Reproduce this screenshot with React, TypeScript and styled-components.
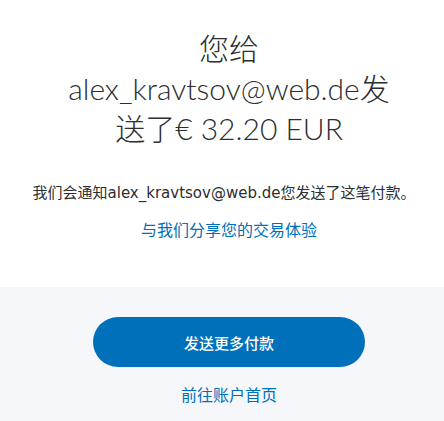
import styled, { createGlobalStyle } from "styled-components";

const GlobalStyle = createGlobalStyle`
    html, body {
        margin: 0;
        padding: 0;
        background: #ffffff;
    }
    body {
        font-family: "Open Sans", "Noto Sans CJK SC", sans-serif;
        color: #2c2e2f;
    }
`;

const Page = styled.div`
    width: 444px;
    min-height: 421px;
    display: flex;
    flex-direction: column;
`;

const Top = styled.section`
    box-sizing: border-box;
    background: #ffffff;
    padding: 28px 0 0 14px;
    height: 287px;
    display: flex;
    flex-direction: column;
    align-items: center;
`;

const Title = styled.h1`
    margin: 0;
    width: 340px;
    text-align: center;
    font-family: "Lato", "Noto Sans CJK SC", sans-serif;
    font-weight: 300;
    font-size: 30px;
    line-height: 40px;
    color: #2c2e2f;
`;

const Note = styled.p`
    margin: 35px 10px 0 0;
    font-family: "DejaVu Sans", "Noto Sans CJK SC", sans-serif;
    font-size: 15px;
    line-height: 20px;
    color: #2c2e2f;
    white-space: nowrap;
`;

const TextLink = styled.a<{ $top: number }>`
    display: block;
    margin-top: ${(p) => p.$top}px;
    font-family: "Open Sans", "Noto Sans CJK SC", sans-serif;
    font-size: 16px;
    line-height: 22px;
    color: #0070ba;
    text-decoration: none;
    text-align: center;
`;

const Bottom = styled.section`
    flex: 1;
    background: #f5f7fa;
    display: flex;
    flex-direction: column;
    align-items: center;
    padding: 30px 0 0 14px;
`;

const PrimaryButton = styled.button`
    width: 272px;
    height: 50px;
    border: none;
    border-radius: 25px;
    background: #0070ba;
    color: #ffffff;
    font-family: "Open Sans", "Noto Sans CJK SC", sans-serif;
    font-size: 15px;
    font-weight: 500;
    cursor: pointer;
`;

export default function App() {
    return (
        <>
            <GlobalStyle />
            <Page>
                <Top>
                    <Title>您给alex_kravtsov@web.de发送了€ 32.20 EUR</Title>
                    <Note>我们会通知alex_kravtsov@web.de您发送了这笔付款。</Note>
                    <TextLink href="#" $top={16}>与我们分享您的交易体验</TextLink>
                </Top>
                <Bottom>
                    <PrimaryButton>发送更多付款</PrimaryButton>
                    <TextLink href="#" $top={17}>前往账户首页</TextLink>
                </Bottom>
            </Page>
        </>
    );
}
